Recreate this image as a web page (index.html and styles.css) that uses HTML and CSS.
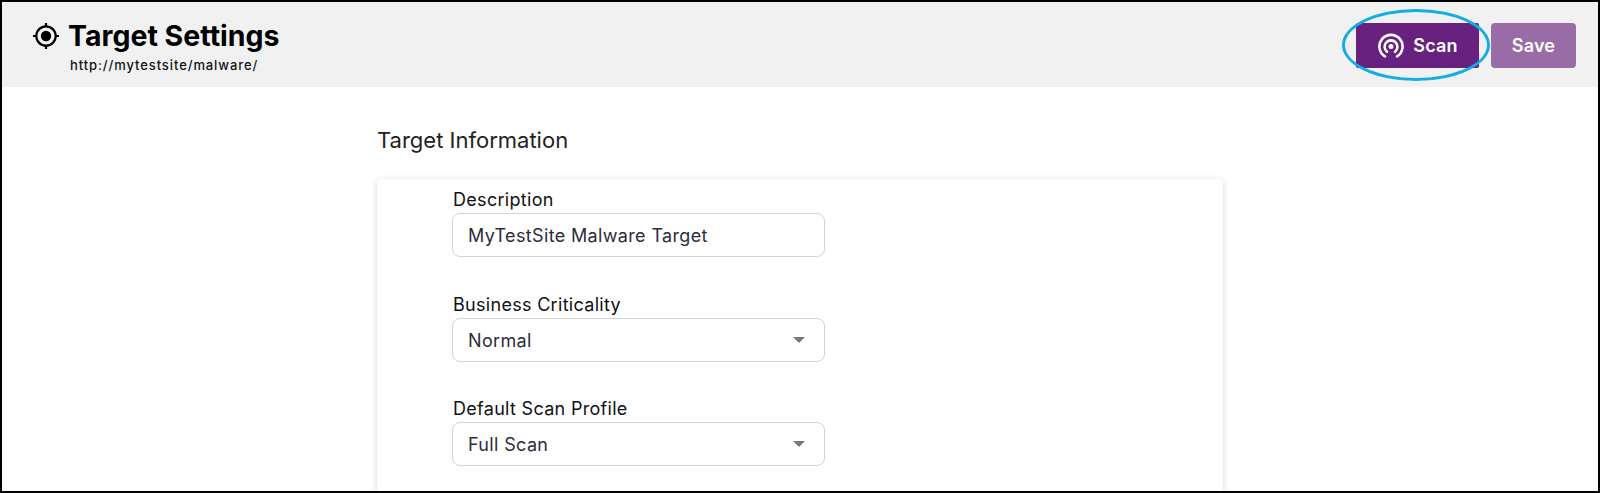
FILE: index.html
```html
<!DOCTYPE html>
<html lang="en">
<head>
<meta charset="utf-8">
<title>Target Settings</title>
<link rel="stylesheet" href="styles.css">
</head>
<body>
<div class="frame">
  <header class="topbar">
    <div class="heading">
      <div class="title-row">
        <svg class="target-icon" viewBox="0 0 28 28" width="28" height="28" aria-hidden="true">
          <circle cx="14" cy="14" r="9.7" fill="none" stroke="#000" stroke-width="2.2"/>
          <circle cx="14" cy="14" r="5.2" fill="#000"/>
          <path d="M14 1v4M14 23v4M1 14h4M23 14h4" stroke="#000" stroke-width="2.2" fill="none"/>
        </svg>
        <h1 class="title">Target Settings</h1>
      </div>
      <div class="subtitle">http://mytestsite/malware/</div>
    </div>
    <div class="actions">
      <button class="btn btn-scan" type="button">
        <svg class="scan-icon" viewBox="0 0 26 26" width="26" height="26" aria-hidden="true">
          <path d="M7 23.4A11.6 11.6 0 1 1 19 23.4" fill="none" stroke="#fff" stroke-width="2.6" stroke-linecap="round"/>
          <path d="M9 18.8A6.4 6.4 0 1 1 17 18.8" fill="none" stroke="#fff" stroke-width="2.6" stroke-linecap="round"/>
          <circle cx="13" cy="13.6" r="2.5" fill="#fff"/>
        </svg>
        <span>Scan</span>
        <span class="highlight"></span>
      </button>
      <button class="btn btn-save" type="button">Save</button>
    </div>
  </header>
  <main class="content">
    <h2 class="section-title">Target Information</h2>
    <section class="card">
      <div class="field">
        <label class="field-label">Description</label>
        <div class="control">MyTestSite Malware Target</div>
      </div>
      <div class="field">
        <label class="field-label">Business Criticality</label>
        <div class="control">Normal<span class="caret"></span></div>
      </div>
      <div class="field">
        <label class="field-label">Default Scan Profile</label>
        <div class="control">Full Scan<span class="caret"></span></div>
      </div>
    </section>
  </main>
</div>
</body>
</html>
```
FILE: styles.css
```css
* { box-sizing: border-box; }
html, body { margin: 0; height: 100%; }
body { font-family: "Inter", "Liberation Sans", sans-serif; background: #fff; overflow: hidden; }
.frame { height: 493px; border: 2px solid #000; overflow: hidden; display: flex; flex-direction: column; }
.topbar { flex: none; height: 85px; background: #f1f1f1; display: flex; justify-content: space-between; padding: 21px 22px 0 30px; }
.title-row { display: flex; align-items: center; gap: 8px; height: 28px; margin-top: -1px; }
.target-icon { flex: none; }
.title { margin: 0; font-size: 28.5px; font-weight: 700; color: #000; line-height: 28px; }
.subtitle { margin: 8px 0 0 38px; font-size: 13px; font-weight: 500; color: #111; line-height: 14px; letter-spacing: .9px; }
.actions { display: flex; gap: 12px; height: 45px; }
.btn { border: 0; color: #fff; font-family: inherit; font-size: 18px; font-weight: 600; padding: 0; display: flex; align-items: center; justify-content: center; letter-spacing: .2px; }
.btn-scan { position: relative; width: 123px; background: #68217f; border-radius: 2px; gap: 9px; padding-left: 1px; }
.btn-save { width: 85px; background: #996ca8; border-radius: 4px; }
.highlight { position: absolute; left: -14px; top: -14px; width: 148px; height: 72px; border: 3px solid #14ace6; border-radius: 50%; }
.content { flex: 1; padding: 39px 0 0 375px; }
.section-title { margin: 0; font-size: 22px; font-weight: 400; color: #222; line-height: 28px; }
.card { width: 846px; height: 400px; margin-top: 25px; padding: 8px 0 0 75px; background: #fff; border-radius: 5px; box-shadow: 0 1px 6px rgba(0,0,0,.16); }
.field { width: 373px; height: 104.5px; }
.field-label { display: block; padding-left: 1px; font-size: 18px; font-weight: 400; color: #111; line-height: 25px; height: 26px; letter-spacing: .3px; }
.control { position: relative; height: 44px; border: 1px solid #d3d3d6; border-radius: 8px; padding: 1px 0 0 15px; font-size: 18px; line-height: 42px; color: #2c2c3c; background: #fff; letter-spacing: .35px; }
.caret { position: absolute; right: 19px; top: 18px; width: 0; height: 0; border-left: 6px solid transparent; border-right: 6px solid transparent; border-top: 6px solid #77777c; }
```
